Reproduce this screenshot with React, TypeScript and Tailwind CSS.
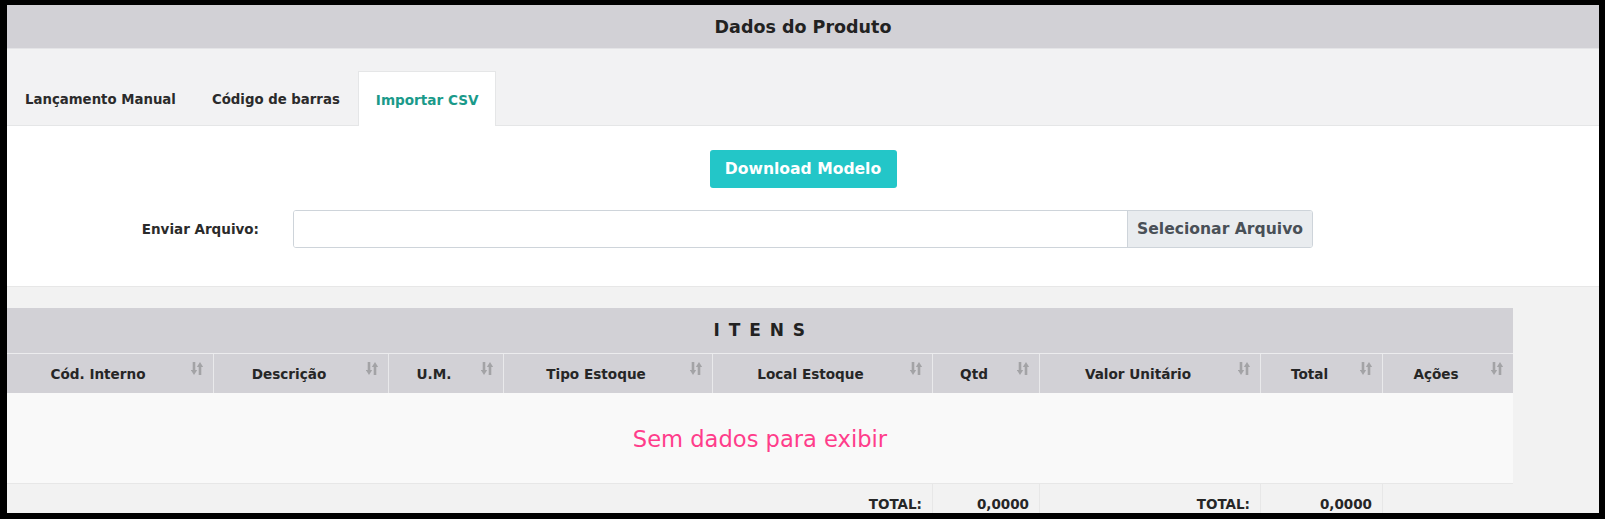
const font = { fontFamily: '"DejaVu Sans", Verdana, sans-serif' };

const columns = [
  { label: "Cód. Interno", width: "w-[206px]" },
  { label: "Descrição", width: "w-[175px]" },
  { label: "U.M.", width: "w-[115px]" },
  { label: "Tipo Estoque", width: "w-[209px]" },
  { label: "Local Estoque", width: "w-[220px]" },
  { label: "Qtd", width: "w-[107px]" },
  { label: "Valor Unitário", width: "w-[221px]" },
  { label: "Total", width: "w-[122px]" },
  { label: "Ações", width: "w-[131px]" },
];

function SortIcon() {
  return (
    <svg width="12" height="15" viewBox="0 0 12 15" className="absolute right-[10px] top-[7px] text-[#a3a3a6]" aria-hidden="true">
      <path d="M3 1v9" stroke="currentColor" strokeWidth="2.6" />
      <path d="M-0.2 9h6.4l-3.2 5z" fill="currentColor" />
      <path d="M9 5v9" stroke="currentColor" strokeWidth="2.6" />
      <path d="M5.8 6h6.4l-3.2-5z" fill="currentColor" />
    </svg>
  );
}

export default function App() {
  return (
    <div className="h-[519px] w-[1605px] overflow-hidden border-b-[6px] border-l-[7px] border-r-[6px] border-t-[5px] border-black bg-[#f2f2f2]" style={font}>
      <div className="flex h-full flex-col">
        <div className="flex h-[44px] shrink-0 items-center justify-center border-b border-[#e4e4e7] bg-[#d2d1d6] pt-[1px] text-[17.5px] font-bold text-[#222]">
          Dados do Produto
        </div>

        <div className="flex h-[77px] shrink-0 items-end border-b border-[#e5e6e7] bg-[#f2f2f3] text-[13.3px] font-bold text-[#2b2b2b]">
          <div className="flex h-[54px] items-center px-[18px] pt-[3px]">Lançamento Manual</div>
          <div className="flex h-[54px] items-center px-[18px] pt-[3px]">Código de barras</div>
          <div className="-mb-px flex h-[55px] items-center border border-b-0 border-[#e5e6e7] bg-white px-[17px] pt-[3px] text-[13.6px] text-[#1a9a8a]">Importar CSV</div>
        </div>

        <div className="flex h-[161px] shrink-0 flex-col items-center border-b border-[#e7e7e7] bg-white pt-[24px]">
          <button className="h-[38px] w-[187px] rounded-[3px] bg-[#23c6c8] pt-[1px] text-[15.6px] font-bold text-white">Download Modelo</button>
          <div className="mt-[22px] flex w-full items-center">
            <label className="w-[252px] text-right text-[13.5px] font-bold text-[#2b2b2b]">Enviar Arquivo:</label>
            <div className="ml-[34px] flex h-[38px] w-[1020px] overflow-hidden rounded-[3px] border border-[#ced4da]">
              <div className="flex-1 bg-white" />
              <div className="flex w-[185px] items-center justify-center border-l border-[#ced4da] bg-[#e9ecef] pt-[1px] text-[15.6px] font-bold text-[#495057]">Selecionar Arquivo</div>
            </div>
          </div>
        </div>

        <div className="pt-[21px]">
          <div className="w-[1506px]">
            <div className="flex h-[46px] items-center justify-center border-b border-[#ececee] bg-[#d2d1d6] text-[17px] font-bold tracking-[1.5px] text-[#222]">
              I T E N S
            </div>
            <div className="flex h-[39px] bg-[#d2d1d6] text-[13.6px] font-bold text-[#262626]">
              {columns.map((col, i) => (
                <div key={col.label} className={`relative flex items-center justify-center pt-[2px] pr-[24px] ${col.width} ${i > 0 ? "border-l border-[#e9e9eb]" : ""}`}>
                  {col.label}
                  <SortIcon />
                </div>
              ))}
            </div>
            <div className="flex h-[90px] items-center justify-center bg-[#f9f9f9] pt-[3px] text-[22.6px] text-[#ff3d8b]">
              Sem dados para exibir
            </div>
            <div className="flex h-[38px] border-t border-[#e7e7e7] bg-[#f2f2f2] text-[13.5px] font-bold text-[#262626]">
              <div className="w-[925px] pr-[10px] pt-[10px] text-right">TOTAL:</div>
              <div className="w-[107px] border-l border-[#e7e7e7] pr-[10px] pt-[10px] text-right">0,0000</div>
              <div className="w-[221px] border-l border-[#e7e7e7] pr-[10px] pt-[10px] text-right">TOTAL:</div>
              <div className="w-[122px] border-l border-[#e7e7e7] pr-[10px] pt-[10px] text-right">0,0000</div>
              <div className="w-[131px] border-l border-[#e7e7e7]" />
            </div>
          </div>
        </div>
      </div>
    </div>
  );
}
